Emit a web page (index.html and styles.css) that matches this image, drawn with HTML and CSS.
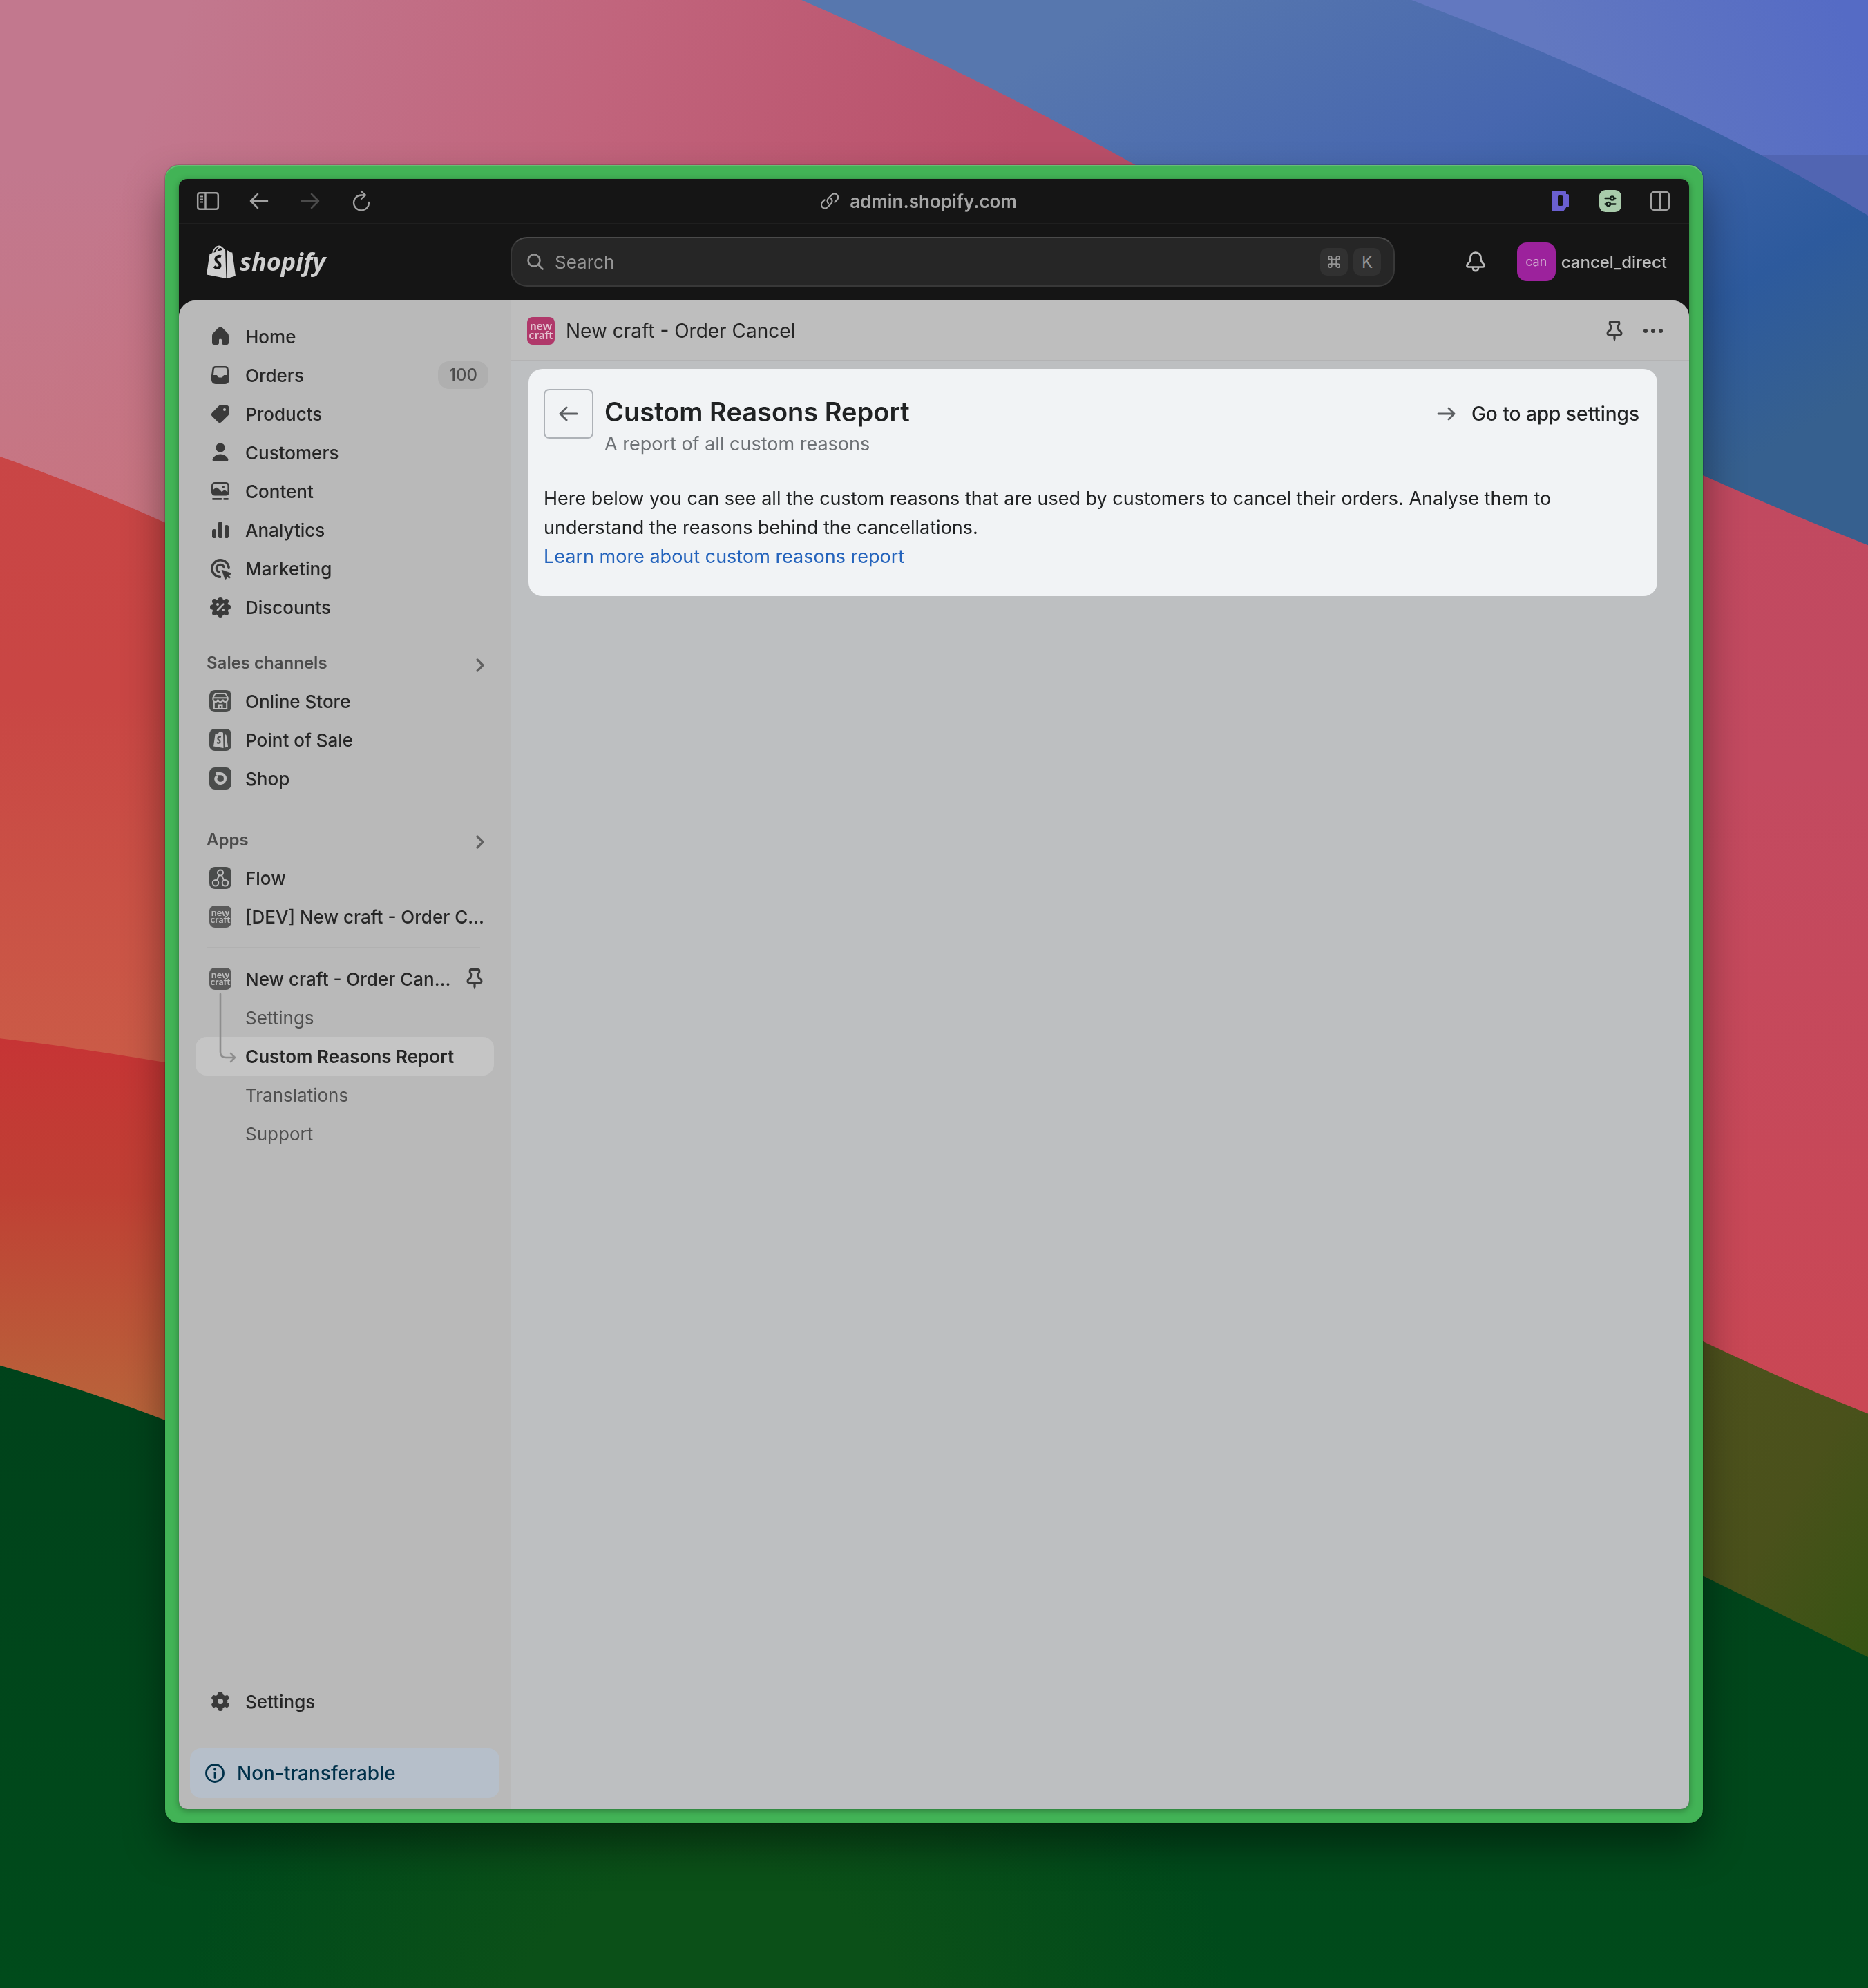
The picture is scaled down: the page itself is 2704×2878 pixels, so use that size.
FILE: index.html
```html
<!DOCTYPE html>
<html lang="en">
<head>
    <meta charset="UTF-8">
    <meta name="viewport" content="width=device-width, initial-scale=1.0">
    <title>Custom Reasons Report</title>
    <link rel="stylesheet" href="styles.css">
</head>
<body>
    <!-- wallpaper -->
    <svg class="wallpaper" viewBox="0 0 1473 1568" preserveAspectRatio="none" aria-hidden="true">
        <defs>
            <linearGradient id="pink" gradientUnits="userSpaceOnUse" x1="150" y1="0" x2="760" y2="240">
                <stop offset="0" stop-color="#c2788e"/>
                <stop offset=".5" stop-color="#c1647c"/>
                <stop offset="1" stop-color="#b94f69"/>
            </linearGradient>
            <linearGradient id="pinkLeft" x1="0" y1="0" x2="0" y2="1">
                <stop offset="0" stop-color="#c87580" stop-opacity="0"/>
                <stop offset="1" stop-color="#c87580"/>
            </linearGradient>
            <linearGradient id="blue" gradientUnits="userSpaceOnUse" x1="900" y1="0" x2="1180" y2="480">
                <stop offset="0" stop-color="#5777ae"/>
                <stop offset=".4" stop-color="#4767af"/>
                <stop offset=".78" stop-color="#2d5a9d"/>
                <stop offset="1" stop-color="#36608f"/>
            </linearGradient>
            <linearGradient id="indigo" gradientUnits="userSpaceOnUse" x1="1240" y1="90" x2="1450" y2="0">
                <stop offset="0" stop-color="#6278c0"/>
                <stop offset="1" stop-color="#556bc5"/>
            </linearGradient>
            <linearGradient id="red" x1="0" y1="0" x2="0" y2="1">
                <stop offset="0" stop-color="#c94546"/>
                <stop offset=".45" stop-color="#c94644"/>
                <stop offset="1" stop-color="#cb5c47"/>
            </linearGradient>
            <linearGradient id="ember" gradientUnits="userSpaceOnUse" x1="0" y1="820" x2="0" y2="1120">
                <stop offset="0" stop-color="#c63435"/>
                <stop offset=".4" stop-color="#bf4034"/>
                <stop offset="1" stop-color="#b9653b"/>
            </linearGradient>
            <linearGradient id="rose" x1="0" y1="0" x2="0" y2="1">
                <stop offset="0" stop-color="#be4860"/>
                <stop offset=".5" stop-color="#c34a60"/>
                <stop offset="1" stop-color="#ca4754"/>
            </linearGradient>
            <linearGradient id="olive" x1="0" y1="0" x2="1" y2="1">
                <stop offset="0" stop-color="#50521e"/>
                <stop offset=".6" stop-color="#4a511b"/>
                <stop offset="1" stop-color="#365412"/>
            </linearGradient>
            <linearGradient id="green" gradientUnits="userSpaceOnUse" x1="0" y1="1050" x2="0" y2="1568">
                <stop offset="0" stop-color="#00421b"/>
                <stop offset=".5" stop-color="#00461b"/>
                <stop offset="1" stop-color="#004b1b"/>
            </linearGradient>
            <radialGradient id="moss" gradientUnits="userSpaceOnUse" cx="560" cy="1640" r="420">
                <stop offset="0" stop-color="#0b5018"/>
                <stop offset=".4" stop-color="#0b5018"/>
                <stop offset="1" stop-color="#0b5018" stop-opacity="0"/>
            </radialGradient>
        </defs>
        <rect width="1473" height="1568" fill="url(#green)"/>
        <rect y="1100" width="1100" height="468" fill="url(#moss)"/>
        <path d="M1300 1030L1473 1115V1307L1343 1243L1300 1225Z" fill="url(#olive)"/>
        <path d="M736 100H1300L1473 430V1115Q1410 1090 1343 1058L736 800Z" fill="url(#rose)"/>
        <path d="M0 700H200V1150L130 1120Q70 1097 0 1077Z" fill="url(#ember)"/>
        <path d="M0 300H200V850L130 838Q60 826 0 819Z" fill="url(#red)"/>
        <path d="M0 0H900V440H190L130 412Q70 385 0 360Z" fill="url(#pink)"/>
        <path d="M0 130H200V440L130 412Q70 385 0 360Z" fill="url(#pinkLeft)"/>
        <path d="M632 0H1473V430Q1410 405 1343 375L1100 260L895 130Q775 62 632 0Z" fill="url(#blue)"/>
        <path d="M1388 122H1473V170Q1430 144 1388 122Z" fill="#5165b2"/>
        <path d="M1113 0H1473V122H1388Q1260 55 1113 0Z" fill="url(#indigo)"/>
    </svg>

    <!-- shared glyphs -->
    <svg class="sprite" aria-hidden="true">
        <symbol id="pin" viewBox="0 0 20 20">
            <path d="M7.6 3.3h4.8c.6 0 1 .4 1 1v.6c0 .6-.3.8-.6 1.2-.3.4-.3.7-.2 1.2l.3 1.8c.1.5.4.6 1 .9.7.4 1.1.9 1.1 1.7 0 .6-.4 1-1 1H6c-.6 0-1-.4-1-1 0-.8.4-1.3 1.1-1.7.6-.3.9-.4 1-.9l.3-1.8c.1-.5.1-.8-.2-1.2-.3-.4-.6-.6-.6-1.2v-.6c0-.6.4-1 1-1Z" fill="none" stroke="currentColor" stroke-width="1.5"/>
            <path d="M9.2 13.2h1.6v2.4l-.5 1.8c-.1.3-.5.3-.6 0l-.5-1.8Z" fill="currentColor"/>
        </symbol>
        <symbol id="chevron" viewBox="0 0 20 20">
            <path d="M8 6l4 4-4 4" fill="none" stroke="currentColor" stroke-width="1.6" stroke-linecap="round" stroke-linejoin="round"/>
        </symbol>
        <symbol id="arrow-left" viewBox="0 0 20 20">
            <path d="M16 10H4.5M8.5 5.5L4 10l4.5 4.5" fill="none" stroke="currentColor" stroke-width="1.5" stroke-linecap="round" stroke-linejoin="round"/>
        </symbol>
    </svg>

    <div class="desktop">
        <div class="frame">
            <div class="window">
                <!-- browser toolbar -->
                <div class="toolbar">
                    <div class="toolbar-left">
                        <button class="tool" aria-label="Toggle sidebar">
                            <svg viewBox="0 0 36 32"><g fill="none" stroke="currentColor" stroke-width="2.5"><rect x="3.2" y="4.2" width="29.6" height="23.6" rx="3"/><path d="M14.5 4v24"/></g><path d="M7 9.5h4M7 13.5h4M7 17.5h4" stroke="currentColor" stroke-width="2"/></svg>
                        </button>
                        <button class="tool" aria-label="Back">
                            <svg viewBox="0 0 36 32"><path d="M30 16H6.5M16 6L6 16l10 10" fill="none" stroke="currentColor" stroke-width="2.6" stroke-linecap="round" stroke-linejoin="round"/></svg>
                        </button>
                        <button class="tool tool-off" aria-label="Forward">
                            <svg viewBox="0 0 36 32"><path d="M6 16h23.5M20 6l10 10-10 10" fill="none" stroke="currentColor" stroke-width="2.6" stroke-linecap="round" stroke-linejoin="round"/></svg>
                        </button>
                        <button class="tool" aria-label="Reload">
                            <svg viewBox="0 0 36 32"><path d="M29 18A11 11 0 1 1 18.5 7.5H24M18 2l6 5.5-6 5.5" fill="none" stroke="currentColor" stroke-width="2.3" stroke-linecap="round" stroke-linejoin="round"/></svg>
                        </button>
                    </div>
                    <div class="address">
                        <svg class="link-icon" viewBox="0 0 26 26"><g fill="none" stroke="currentColor" stroke-width="2.2" stroke-linecap="round"><path d="M11 16.5A5.3 5.3 0 0 1 11.2 9l5-5a5.2 5.2 0 0 1 7.4 7.4l-3.2 3.2"/><path d="M15 9.5a5.3 5.3 0 0 1-.2 7.5l-5 5a5.2 5.2 0 0 1-7.4-7.4l3.2-3.2"/></g></svg>
                        <span>admin.shopify.com</span>
                    </div>
                    <div class="toolbar-right">
                        <button class="tool" aria-label="Extension D">
                            <svg viewBox="0 0 36 32"><path fill="#6a5fd0" fill-rule="evenodd" d="M5.5 1h18.5q2 0 2 2v3h2.500q1.5 0 1.5 1.5v16q0 1.5-1.5 1.5H26v.5l-4 5.5H5.5ZM14 9.500v12q0 1.5 1.5 1.5h3.5q3 0 3-3v-9q0-3-3-3h-3.5q-1.5 0-1.5 1.5Z"/></svg>
                        </button>
                        <button class="tool" aria-label="Extension sliders">
                            <svg viewBox="0 0 36 32"><rect x="2" width="32" height="32" rx="9" fill="#a9cbab"/><g fill="none" stroke="#15201a" stroke-width="2.3" stroke-linecap="round"><path d="M10.5 12h7M24 12h1.5M10.5 20.5h1.5M18.5 20.5h7"/><circle cx="20.7" cy="12" r="2.6"/><circle cx="15.3" cy="20.5" r="2.6"/></g></svg>
                        </button>
                        <button class="tool" aria-label="Split view">
                            <svg viewBox="0 0 36 32"><g fill="none" stroke="currentColor" stroke-width="2.4"><rect x="5.2" y="3.2" width="25.6" height="25.6" rx="3.5"/><path d="M18 3v26"/></g></svg>
                        </button>
                    </div>
                </div>

                <!-- admin header -->
                <header class="header">
                    <a class="logo" href="#" aria-label="Shopify home">
                        <svg class="bag" viewBox="0 0 42 48">
                            <path d="M4.5 12.5L27 5.5l1.5 42.5L0 42.5Z" fill="currentColor"/>
                            <path d="M30 7l3.5 3 3.8.5L42 44.5 30 48Z" fill="currentColor"/>
                            <path d="M9 12C10 6 14 1.5 18 1.5S24 6 24 9.5M14 11C15 5 19 2 22 3.5s3.5 3 4 6" fill="none" stroke="currentColor" stroke-width="1.8"/>
                            <path d="M21 16.5c-2.5-1.2-6.5-.8-7.5 2.7-1.3 5 6 5.3 6 9.8 0 4.2-4.8 5.2-8.5 1.8" fill="none" stroke="#151515" stroke-width="4"/>
                        </svg>
                        <span class="logo-text">shopify</span>
                    </a>
                    <div class="search">
                        <svg class="search-icon" viewBox="0 0 24 24"><g fill="none" stroke="currentColor" stroke-width="2.6" stroke-linecap="round"><circle cx="10" cy="10" r="8.5"/><path d="M16.5 16.5l6 6"/></g></svg>
                        <input type="text" placeholder="Search" aria-label="Search">
                        <kbd><svg viewBox="0 0 20 20"><path d="M7 7V4.8A2.2 2.2 0 1 0 4.800 7h10.400A2.2 2.2 0 1 0 13 4.800v10.400a2.2 2.2 0 1 0 2.200-2.200H4.800A2.2 2.2 0 1 0 7 15.200Z" fill="none" stroke="currentColor" stroke-width="1.7"/></svg></kbd>
                        <kbd>K</kbd>
                    </div>
                    <div class="account">
                        <button class="bell" aria-label="Notifications">
                            <svg viewBox="0 0 28 30"><g fill="none" stroke="currentColor" stroke-width="2.7" stroke-linejoin="round"><path d="M14 1.5c-4.5 0-7.5 3.3-7.5 7.5 0 5.5-1.5 6.5-4 9.2-2 2.2-.9 4.3 1.5 4.3h20c2.4 0 3.5-2.1 1.5-4.3-2.5-2.7-4-3.7-4-9.2 0-4.2-3-7.5-7.5-7.5Z"/><path d="M10 23c0 3 1.5 5.2 4 5.2s4-2.2 4-5.2"/></g></svg>
                        </button>
                        <button class="profile">
                            <span class="avatar">can</span>
                            <span>cancel_direct</span>
                        </button>
                    </div>
                </header>

                <div class="body">
                    <nav class="sidebar">
                        <ul class="nav">
                            <li><a href="#"><svg class="icon" viewBox="0 0 20 20"><path fill="currentColor" d="M8.3 4a2.3 2.3 0 0 1 3.4 0l3.4 3.5c.6.6.9 1.4.9 2.2v4.8c0 .9-.6 1.5-1.5 1.5h-2.2c-.8 0-1.3-.5-1.3-1.2v-2.2c0-.4-.3-.7-.7-.7h-.6c-.4 0-.7.3-.7.7v2.2c0 .7-.5 1.2-1.3 1.2H5.5c-.9 0-1.5-.6-1.5-1.5V9.7c0-.8.3-1.6.9-2.2Z"/></svg>Home</a></li>
                            <li><a href="#"><svg class="icon" viewBox="0 0 20 20"><path fill="currentColor" fill-rule="evenodd" d="M6.5 3.5h7c1.3 0 2.3.9 2.4 2.2l.6 4.6v3.2a3 3 0 0 1-3 3h-7a3 3 0 0 1-3-3v-3.2l.6-4.6c.1-1.3 1.1-2.2 2.4-2.2Zm0 1.3c-.6 0-1 .4-1.1 1L5 10h2c.5 0 .8.3 1 .7l.3.5c.2.3.5.5.9.5h1.6c.4 0 .7-.2.9-.5l.3-.5c.2-.4.5-.7 1-.7h2l-.4-4.2c-.1-.6-.5-1-1.1-1Z"/></svg>Orders</a><span class="badge">100</span></li>
                            <li><a href="#"><svg class="icon" viewBox="0 0 20 20"><path fill="currentColor" fill-rule="evenodd" d="M11 3.5h2.7a2.8 2.8 0 0 1 2.8 2.8V9c0 .8-.3 1.6-.9 2.2l-4.7 4.7a2 2 0 0 1-2.8 0l-4-4a2 2 0 0 1 0-2.8l4.7-4.7c.6-.6 1.4-.9 2.2-.9Zm2 4.5a1 1 0 1 0 0-2 1 1 0 0 0 0 2Z"/></svg>Products</a></li>
                            <li><a href="#"><svg class="icon" viewBox="0 0 20 20"><circle cx="10" cy="6.5" r="3.3" fill="currentColor"/><path fill="currentColor" d="M10 11.3c2.6 0 4.7 1.4 5.6 3.4.4.9-.3 1.8-1.3 1.8H5.7c-1 0-1.7-.9-1.3-1.8.9-2 3-3.4 5.6-3.4Z"/></svg>Customers</a></li>
                            <li><a href="#"><svg class="icon" viewBox="0 0 20 20"><path fill="currentColor" fill-rule="evenodd" d="M6 3.5h8a2.5 2.5 0 0 1 2.5 2.5v4.8a2.5 2.5 0 0 1-2.5 2.5H6a2.5 2.5 0 0 1-2.5-2.5V6A2.5 2.5 0 0 1 6 3.5Zm0 1.3c-.7 0-1.2.5-1.2 1.2v3l1.5-1.3c.6-.5 1.3-.5 1.9 0L11 10.5l1.2-.9c.5-.4 1.1-.4 1.6 0l1.4 1V6c0-.7-.5-1.2-1.2-1.2Z"/><circle cx="12" cy="7" r="1" fill="currentColor"/><path d="M4.7 15.7h5.8M12.8 15.7h2.5" stroke="currentColor" stroke-width="1.4" stroke-linecap="round"/></svg>Content</a></li>
                            <li><a href="#"><svg class="icon" viewBox="0 0 20 20"><g fill="currentColor"><rect x="4" y="9.5" width="3" height="6.5" rx="1.4"/><rect x="8.5" y="4" width="3" height="12" rx="1.4"/><rect x="13" y="6.5" width="3" height="9.5" rx="1.4"/></g></svg>Analytics</a></li>
                            <li><a href="#"><svg class="icon" viewBox="0 0 20 20"><g fill="none" stroke="currentColor" stroke-width="1.7" stroke-linecap="round"><path d="M16.1 9.7A6.1 6.1 0 1 0 9.8 16.1"/><path d="M12.7 9.2A2.8 2.8 0 1 0 9 12.6"/></g><path fill="currentColor" d="M11 11l6 2.2c.7.2.7.9.1 1.2l-1.1.7 1.3 1.3-.9.9-1.3-1.3-.7 1.3c-.3.6-1 .5-1.2-.1Z" stroke="currentColor" stroke-width=".3" stroke-linejoin="round"/></svg>Marketing</a></li>
                            <li><a href="#"><svg class="icon" viewBox="0 0 20 20"><g fill="currentColor"><circle cx="10" cy="10" r="6"/><circle cx="10" cy="4.2" r="1.7"/><circle cx="14.3" cy="5.7" r="1.7"/><circle cx="15.8" cy="10" r="1.7"/><circle cx="14.3" cy="14.3" r="1.7"/><circle cx="10" cy="15.8" r="1.7"/><circle cx="5.7" cy="14.3" r="1.7"/><circle cx="4.2" cy="10" r="1.7"/><circle cx="5.7" cy="5.7" r="1.7"/></g><g class="cut"><path class="cut-line" d="M8 12.2L12.2 7.8"/><circle cx="8" cy="8" r="1"/><circle cx="12" cy="12" r="1"/></g></svg>Discounts</a></li>
                        </ul>

                        <h2 class="group-title">Sales channels<svg class="chevron"><use href="#chevron"/></svg></h2>
                        <ul class="nav">
                            <li><a href="#"><span class="tile"><svg viewBox="0 0 32 32"><g fill="none" stroke="currentColor" stroke-width="2"><path d="M8.5 5h15l3.2 6v2.5a3.5 3.5 0 0 1-7 0 3.6 3.6 0 0 1-7.3 0 3.5 3.5 0 0 1-7 0V11Z"/><path d="M5.5 11.2h21M6.8 17v10h18.4V17"/></g><path d="M12.5 27v-6.5h7V27h-2.3v-4h-2.4v4Z" fill="currentColor"/></svg></span>Online Store</a></li>
                            <li><a href="#"><span class="tile"><svg viewBox="0 0 32 32"><path d="M8.5 8L13 6.5C14 4.5 15.5 4 17 4s2.5 1 3 2.5L20.5 28 6 25.5Z" fill="currentColor"/><path d="M22 7.5l2.5 1.5L27 26l-4.5 1.5Z" fill="currentColor"/><path d="M16.8 12c-2-.8-4.3 0-4.5 1.9-.2 2.4 3.4 2.4 3.2 5-.2 2-2.8 2.2-4.7 1" class="cut"/></svg></span>Point of Sale</a></li>
                            <li><a href="#"><span class="tile"><svg viewBox="0 0 32 32"><path d="M9 9.2h7.2a6.9 6.9 0 1 1-6.9 8c-.1-2 1-3.5 3.2-3.9" fill="none" stroke="currentColor" stroke-width="4.2" stroke-linejoin="round"/></svg></span>Shop</a></li>
                        </ul>

                        <h2 class="group-title group-title-apps">Apps<svg class="chevron"><use href="#chevron"/></svg></h2>
                        <ul class="nav">
                            <li><a href="#"><span class="tile"><svg viewBox="0 0 32 32"><g fill="none" stroke="currentColor" stroke-width="2"><circle cx="16" cy="8.5" r="4"/><circle cx="9" cy="23.2" r="4.3"/><circle cx="23" cy="23.2" r="4.3"/><path d="M14.2 12L11 19.3M17.8 12L21 19.3"/></g></svg></span>Flow</a></li>
                            <li><a href="#"><span class="tile tile-craft">new<br>craft</span><span class="clip">[DEV] New craft - Order Cancel</span></a></li>
                        </ul>
                        <hr class="divider">
                        <ul class="nav">
                            <li><a href="#"><span class="tile tile-craft">new<br>craft</span><span class="clip">New craft - Order Cancel</span></a><button class="pin pin-side" aria-label="Unpin app"><svg><use href="#pin"/></svg></button></li>
                        </ul>
                        <ul class="nav subnav">
                            <li><a href="#">Settings</a></li>
                            <li class="active"><a href="#">Custom Reasons Report</a></li>
                            <li><a href="#">Translations</a></li>
                            <li><a href="#">Support</a></li>
                            <li class="connector" aria-hidden="true"><svg viewBox="0 0 26 104"><path d="M2 2v84q0 8 8 8h13M17 88l6 6-6 6" fill="none" stroke="currentColor" stroke-width="2.6" stroke-linecap="round" stroke-linejoin="round"/></svg></li>
                        </ul>

                        <ul class="nav nav-bottom">
                            <li><a href="#"><svg class="icon" viewBox="0 0 20 20"><g fill="currentColor"><circle cx="10" cy="10" r="5.2"/><rect x="8.3" y="3" width="3.4" height="14" rx="1.5"/><rect x="8.3" y="3" width="3.4" height="14" rx="1.5" transform="rotate(60 10 10)"/><rect x="8.3" y="3" width="3.4" height="14" rx="1.5" transform="rotate(120 10 10)"/></g><circle class="cut" cx="10" cy="10" r="2"/></svg>Settings</a></li>
                        </ul>
                        <a class="notice" href="#">
                            <svg viewBox="0 0 28 28"><circle cx="14" cy="14" r="12.5" fill="none" stroke="currentColor" stroke-width="2.8"/><path d="M14 13.5v7" stroke="currentColor" stroke-width="2.8" stroke-linecap="round"/><circle cx="14" cy="8.5" r="1.9" fill="currentColor"/></svg>
                            Non-transferable
                        </a>
                    </nav>

                    <main class="main">
                        <div class="app-bar">
                            <span class="app-icon">new<br>craft</span>
                            <span class="app-name">New craft - Order Cancel</span>
                            <button class="pin" aria-label="Pin app"><svg><use href="#pin"/></svg></button>
                            <button class="more" aria-label="More actions"><svg viewBox="0 0 28 6"><g fill="currentColor"><circle cx="3" cy="3" r="3"/><circle cx="14" cy="3" r="3"/><circle cx="25" cy="3" r="3"/></g></svg></button>
                        </div>
                        <section class="card">
                            <div class="card-head">
                                <button class="back" aria-label="Back"><svg><use href="#arrow-left"/></svg></button>
                                <div class="titles">
                                    <h1>Custom Reasons Report</h1>
                                    <p>A report of all custom reasons</p>
                                </div>
                                <a class="settings-link" href="#">
                                    <svg viewBox="0 0 28 20"><path d="M2 10h23M17 2l8 8-8 8" fill="none" stroke="currentColor" stroke-width="2.8" stroke-linecap="round" stroke-linejoin="round"/></svg>
                                    Go to app settings
                                </a>
                            </div>
                            <p>Here below you can see all the custom reasons that are used by customers to cancel their orders. Analyse them to understand the reasons behind the cancellations.</p>
                            <a class="learn" href="#">Learn more about custom reasons report</a>
                        </section>
                    </main>
                </div>
            </div>
        </div>
    </div>
</body>
</html>
```
FILE: styles.css
```css
* {
    box-sizing: border-box;
}
body {
    margin: 0;
    font-family: Inter, "Liberation Sans", sans-serif;
    font-size: 26px;
    color: #262626;
    background: #00451b;
}
ul, h1, h2, p {
    margin: 0;
    padding: 0;
}
ul {
    list-style: none;
}
a {
    color: inherit;
    text-decoration: none;
}
button {
    display: flex;
    align-items: center;
    justify-content: center;
    padding: 0;
    border: none;
    background: none;
    color: inherit;
    font: inherit;
    cursor: pointer;
}
svg {
    display: block;
    flex-shrink: 0;
}
.sprite {
    display: none;
}
.wallpaper {
    position: fixed;
    inset: 0;
    width: 100%;
    height: 100%;
}

/* window */
.desktop {
    position: relative;
    display: flex;
    min-height: 100vh;
    padding: 239px;
}
.frame {
    flex: 1;
    display: flex;
    padding: 20px;
    border-radius: 20px;
    background: #42b356;
    box-shadow: 0 0 2px rgba(0, 0, 0, 0.6), 0 32px 60px rgba(0, 0, 0, 0.42), inset 0 2px 0 #68be76;
}
.window {
    flex: 1;
    display: flex;
    flex-direction: column;
    min-width: 0;
    overflow: hidden;
    border-radius: 12px;
    background: #151515;
    box-shadow: 0 2px 10px rgba(0, 0, 0, 0.35);
}

/* browser toolbar */
.toolbar {
    display: grid;
    grid-template-columns: 1fr auto 1fr;
    align-items: center;
    height: 66px;
    padding: 0 24px;
    border-bottom: 2px solid #1f1f1f;
    color: #a0a0a0;
}
.toolbar-left {
    display: flex;
    gap: 38px;
}
.toolbar-right {
    display: flex;
    justify-content: flex-end;
    gap: 36px;
}
.tool svg {
    width: 36px;
    height: 32px;
}
.tool-off {
    color: #4a4a4a;
}
.address {
    display: flex;
    align-items: center;
    gap: 16px;
    padding-right: 44px;
    font-weight: 600;
    color: #a6a6a6;
}
.link-icon {
    width: 26px;
    height: 26px;
}

/* admin header */
.header {
    display: flex;
    align-items: center;
    height: 110px;
    padding: 0 32px 2px 40px;
    color: #bcbcbc;
}
.logo {
    display: flex;
    align-items: center;
    gap: 6px;
    width: 440px;
    color: #cfcfcf;
}
.bag {
    width: 42px;
    height: 48px;
}
.logo-text {
    font-family: "Open Sans", sans-serif;
    font-size: 36px;
    line-height: 48px;
    font-weight: 700;
    font-style: italic;
}
.search {
    flex: 1;
    display: flex;
    align-items: center;
    gap: 8px;
    height: 72px;
    padding: 0 18px 0 22px;
    border: 2px solid #383838;
    border-top-color: #4a4a4a;
    border-radius: 24px;
    background: #262626;
    color: #959595;
}
.search-icon {
    width: 24px;
    height: 24px;
    margin-right: 8px;
}
.search input {
    flex: 1;
    min-width: 0;
    padding: 0;
    border: none;
    outline: none;
    background: none;
    color: inherit;
    font: inherit;
}
.search input::placeholder {
    color: inherit;
    opacity: 1;
}
.search kbd {
    display: flex;
    align-items: center;
    justify-content: center;
    width: 40px;
    height: 40px;
    border-radius: 10px;
    background: #313131;
    font-family: inherit;
    font-size: 24px;
}
.search kbd svg {
    width: 22px;
    height: 22px;
}
.account {
    display: flex;
    align-items: center;
    justify-content: flex-end;
    gap: 46px;
    width: 394px;
}
.bell svg {
    width: 28px;
    height: 30px;
}
.profile {
    gap: 8px;
    font-size: 24px;
    font-weight: 500;
}
.avatar {
    width: 56px;
    border-radius: 14px;
    background: #9c229c;
    color: #cfa9cf;
    font-size: 18px;
    font-weight: 400;
    line-height: 56px;
    text-align: center;
}

/* page body */
.body {
    flex: 1;
    display: flex;
    overflow: hidden;
    border-radius: 24px 24px 0 0;
    background: #bdbfc1;
}
.sidebar {
    display: flex;
    flex-direction: column;
    width: 480px;
    padding: 24px 16px 16px;
    background: #b9b9b9;
}
.nav, .group-title {
    margin: 0 8px;
}
.nav li {
    display: flex;
    align-items: center;
    height: 56px;
    padding-right: 8px;
    border-radius: 16px;
}
.nav a {
    flex: 1;
    display: flex;
    align-items: center;
    gap: 16px;
    min-width: 0;
    padding-left: 16px;
    font-weight: 500;
}
.icon {
    width: 40px;
    height: 40px;
    color: #3a3a3a;
}
.cut {
    fill: #b9b9b9;
}
.cut-line {
    stroke: #b9b9b9;
    stroke-width: 1.3;
    stroke-linecap: round;
}
.badge {
    padding: 0 16px;
    border-radius: 16px;
    background: #afafaf;
    color: #4c4c4c;
    font-size: 24px;
    font-weight: 500;
    line-height: 40px;
}
.group-title {
    display: flex;
    align-items: center;
    justify-content: space-between;
    height: 56px;
    margin-top: 24px;
    padding: 0 0 0 16px;
    color: #4c4c4c;
    font-size: 24px;
    font-weight: 600;
}
.group-title-apps {
    margin-top: 32px;
}
.chevron {
    width: 40px;
    height: 40px;
    margin-top: 8px;
    color: #606060;
}
.tile {
    flex-shrink: 0;
    width: 32px;
    height: 32px;
    margin: 0 4px;
    border-radius: 8px;
    background: #4a4c4b;
    color: #bdbdbd;
}
.tile .cut {
    fill: none;
    stroke: #4a4c4b;
    stroke-width: 2.2;
}
.tile-craft, .app-icon {
    padding-top: 5px;
    font-family: Lato, sans-serif;
    font-size: 14px;
    font-weight: 700;
    line-height: 10px;
    text-align: center;
}
.tile-craft {
    background: #5a5a5a;
}
.clip {
    overflow: hidden;
    text-overflow: ellipsis;
    white-space: nowrap;
}
.pin svg {
    width: 40px;
    height: 40px;
    color: #3a3a3a;
}
.pin-side {
    margin-left: 8px;
}
.divider {
    width: 396px;
    height: 2px;
    margin: 16px 24px;
    border: none;
    background: #b1b1b1;
}
.subnav {
    position: relative;
}
.nav.subnav a {
    padding-left: 72px;
    color: #4f4f4f;
    font-weight: 400;
}
.nav.subnav .active {
    background: #c5c5c5;
}
.nav.subnav .active a {
    color: #262626;
    font-weight: 600;
}
/* line from the app tile down to the active page */
.nav .connector {
    position: absolute;
    top: -8px;
    left: 34px;
    width: 26px;
    height: 104px;
    padding: 0;
    color: #8e8e8e;
}
.nav-bottom {
    margin-top: auto;
    margin-bottom: 40px;
}
.notice {
    display: flex;
    align-items: center;
    gap: 18px;
    height: 72px;
    padding-left: 22px;
    border-radius: 16px;
    background: #b6bfca;
    color: #00314a;
    font-size: 28px;
    font-weight: 500;
}
.notice svg {
    width: 28px;
    height: 28px;
}

/* main column */
.main {
    flex: 1;
    min-width: 0;
}
.app-bar {
    display: flex;
    align-items: center;
    height: 88px;
    padding: 2px 38px 0 24px;
    border-bottom: 2px solid #b3b3b4;
    background: #bebebe;
    font-size: 28px;
}
.app-icon {
    width: 40px;
    height: 40px;
    padding-top: 6px;
    border-radius: 8px;
    background: #b0386a;
    color: #e3c3d0;
    font-size: 17px;
    line-height: 13px;
}
.app-name {
    flex: 1;
    margin-left: 16px;
}
.more {
    margin-left: 22px;
    color: #3a3a3a;
}
.more svg {
    width: 28px;
    height: 6px;
}
.card {
    margin: 11px 46px 0 26px;
    padding: 29px 26px 36px 22px;
    border-radius: 20px;
    background: #f1f3f5;
    color: #202223;
    font-size: 27px;
    line-height: 42px;
}
.card-head {
    display: flex;
    align-items: flex-start;
    margin-bottom: 36px;
}
.back {
    width: 72px;
    height: 72px;
    border: 2px solid #aeb2b7;
    border-radius: 8px;
    color: #5c5f62;
}
.back svg {
    width: 40px;
    height: 40px;
}
.titles {
    flex: 1;
    margin-left: 16px;
    color: #6d7175;
}
.titles h1 {
    margin-top: 8px;
    color: #202223;
    font-size: 38px;
    font-weight: 600;
    line-height: 50px;
}
.titles p {
    line-height: 44px;
}
.settings-link {
    display: flex;
    align-items: center;
    gap: 22px;
    font-size: 28px;
    line-height: 72px;
    font-weight: 500;
}
.settings-link svg {
    width: 28px;
    height: 20px;
    color: #5c5f62;
}
.learn {
    color: #2463bc;
}
```
